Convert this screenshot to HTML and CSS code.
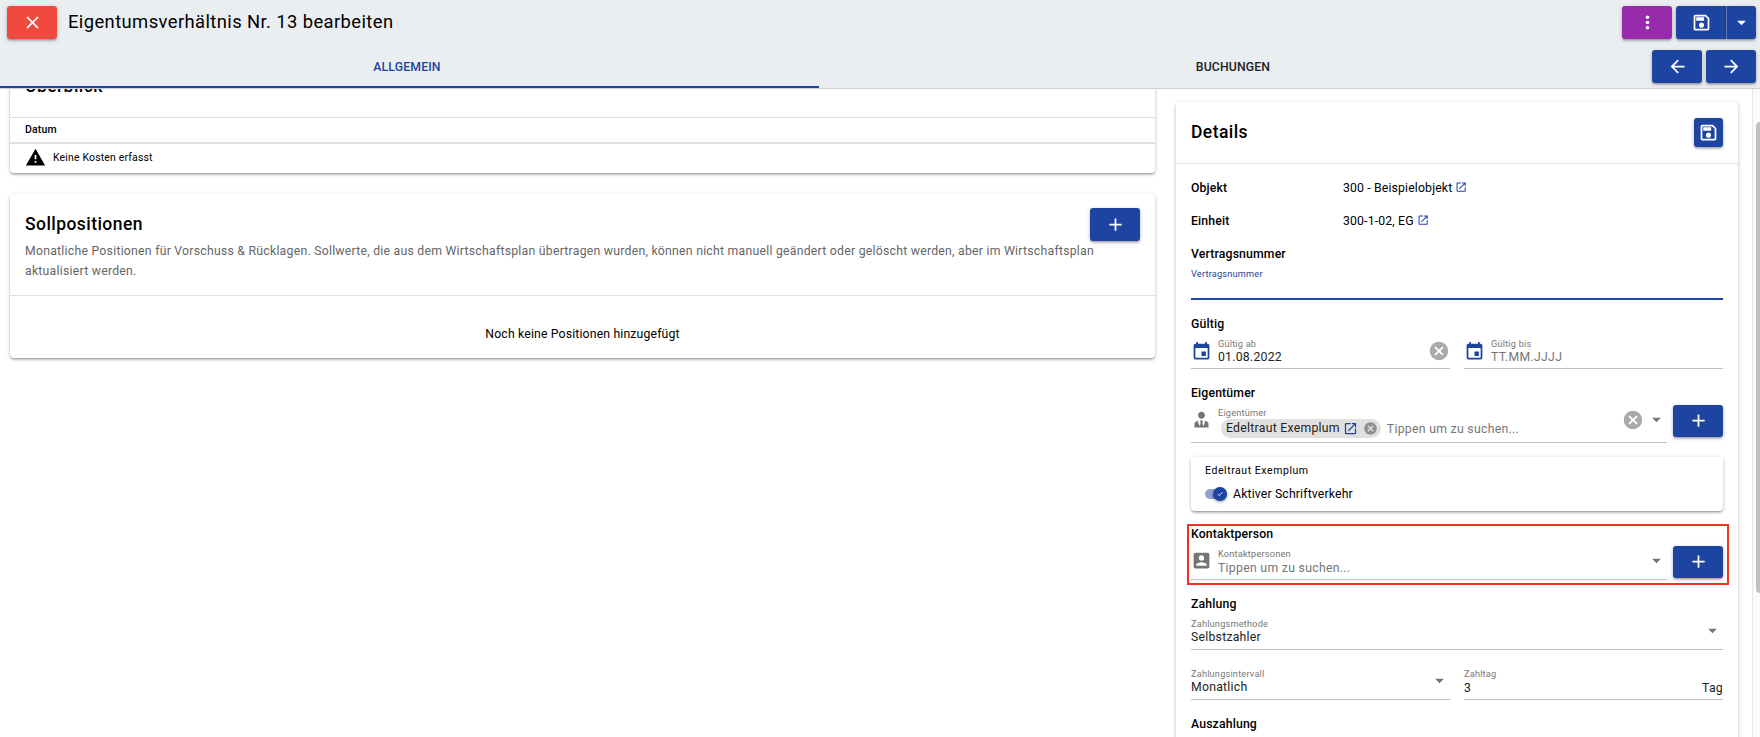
FILE: index.html
```
<!DOCTYPE html>
<html lang="de">
<head>
  <meta charset="UTF-8">
  <title>Eigentumsverhältnis Nr. 13 bearbeiten</title>
  <link rel="stylesheet" href="styles.css">
</head>
<body>
<svg class="sprite">
  <symbol id="close" viewBox="0 0 24 24"><path d="M19,6.41L17.59,5L12,10.59L6.41,5L5,6.41L10.59,12L5,17.59L6.41,19L12,13.41L17.59,19L19,17.59L13.41,12L19,6.41Z"/></symbol>
  <symbol id="dots" viewBox="0 0 24 24"><circle cx="12" cy="6" r="2"/><circle cx="12" cy="12" r="2"/><circle cx="12" cy="18" r="2"/></symbol>
  <symbol id="save" viewBox="0 0 24 24"><path d="M17 3H5C3.89 3 3 3.9 3 5V19C3 20.1 3.89 21 5 21H19C20.1 21 21 20.1 21 19V7L17 3M19 19H5V5H16.17L19 7.83V19M12 12C10.34 12 9 13.34 9 15S10.34 18 12 18 15 16.66 15 15 13.66 12 12 12M6 6H15V10H6V6Z"/></symbol>
  <symbol id="caret" viewBox="0 0 24 24"><path d="M7,10L12,15L17,10H7Z"/></symbol>
  <symbol id="left" viewBox="0 0 24 24"><path d="M20,11V13H8L13.5,18.5L12.08,19.92L4.16,12L12.08,4.08L13.5,5.5L8,11H20Z"/></symbol>
  <symbol id="right" viewBox="0 0 24 24"><path d="M4,11V13H16L10.5,18.5L11.92,19.92L19.84,12L11.92,4.08L10.5,5.5L16,11H4Z"/></symbol>
  <symbol id="plus" viewBox="0 0 24 24"><path d="M19,13H13V19H11V13H5V11H11V5H13V11H19V13Z"/></symbol>
  <symbol id="alert" viewBox="0 0 24 24"><path d="M13 14H11V9H13M13 18H11V16H13M1 21H23L12 2L1 21Z"/></symbol>
  <symbol id="open" viewBox="0 0 24 24"><path d="M14,3V5H17.59L7.76,14.83L9.17,16.24L19,6.41V10H21V3M19,19H5V5H12V3H5C3.89,3 3,3.9 3,5V19A2,2 0 0,0 5,21H19A2,2 0 0,0 21,19V12H19V19Z"/></symbol>
  <symbol id="calendar" viewBox="0 0 24 24"><path d="M19,19H5V8H19M16,1V3H8V1H6V3H5C3.89,3 3,3.89 3,5V19A2,2 0 0,0 5,21H19A2,2 0 0,0 21,19V5C21,3.89 20.1,3 19,3H18V1M17,12H12V17H17V12Z"/></symbol>
  <symbol id="cancel" viewBox="0 0 24 24"><path d="M12 2C6.47 2 2 6.47 2 12s4.47 10 10 10 10-4.47 10-10S17.53 2 12 2zm5 13.59L15.59 17 12 13.41 8.41 17 7 15.59 10.59 12 7 8.41 8.41 7 12 10.59 15.59 7 17 8.41 13.41 12 17 15.59z"/></symbol>
  <symbol id="tie" viewBox="0 0 24 24"><path d="M12 3C14.21 3 16 4.79 16 7S14.21 11 12 11 8 9.21 8 7 9.79 3 12 3M16 13.54C16 14.6 15.72 17.07 13.81 19.83L13 15L13.94 13.12C13.32 13.05 12.67 13 12 13S10.68 13.05 10.06 13.12L11 15L10.19 19.83C8.28 17.07 8 14.6 8 13.54C5.61 14.24 4 15.5 4 17V21H20V17C20 15.5 18.4 14.24 16 13.54Z"/></symbol>
  <symbol id="contact" viewBox="0 0 24 24"><path d="M6,17C6,15 10,13.9 12,13.9C14,13.9 18,15 18,17V18H6M15,9A3,3 0 0,1 12,12A3,3 0 0,1 9,9A3,3 0 0,1 12,6A3,3 0 0,1 15,9M3,5V19A2,2 0 0,0 5,21H19A2,2 0 0,0 21,19V5A2,2 0 0,0 19,3H5C3.89,3 3,3.9 3,5Z"/></symbol>
</svg>

<header class="header">
  <div class="toolbar">
    <button class="btn btn-red"><svg class="icon"><use href="#close"/></svg></button>
    <h1 class="title">Eigentumsverhältnis Nr. 13 bearbeiten</h1>
    <button class="btn btn-purple"><svg class="icon"><use href="#dots"/></svg></button>
    <div class="btn-group">
      <button class="btn"><svg class="icon"><use href="#save"/></svg></button>
      <button class="btn btn-caret"><svg class="icon"><use href="#caret"/></svg></button>
    </div>
  </div>
  <div class="tabbar">
    <nav class="tabs">
      <a class="tab active">ALLGEMEIN</a>
      <a class="tab">BUCHUNGEN</a>
    </nav>
    <button class="btn"><svg class="icon"><use href="#left"/></svg></button>
    <button class="btn"><svg class="icon"><use href="#right"/></svg></button>
  </div>
</header>

<main class="content">
  <div class="col-main">
    <section class="card overview">
      <div class="overview-head"><h2 class="card-title">Überblick</h2></div>
      <div class="table-head">Datum</div>
      <div class="table-empty"><svg class="icon"><use href="#alert"/></svg>Keine Kosten erfasst</div>
    </section>

    <section class="card">
      <div class="positions-head">
        <div class="positions-top">
          <h2 class="card-title">Sollpositionen</h2>
          <button class="btn"><svg class="icon"><use href="#plus"/></svg></button>
        </div>
        <p class="description">Monatliche Positionen für Vorschuss &amp; Rücklagen. Sollwerte, die aus dem Wirtschaftsplan übertragen wurden, können nicht manuell geändert oder gelöscht werden, aber im Wirtschaftsplan<br>aktualisiert werden.</p>
      </div>
      <div class="positions-empty">Noch keine Positionen hinzugefügt</div>
    </section>
  </div>

  <aside class="card details">
    <div class="details-head">
      <h2 class="card-title">Details</h2>
      <button class="btn btn-square"><svg class="icon"><use href="#save"/></svg></button>
    </div>
    <div class="details-body">
      <div class="row"><b>Objekt</b><span>300 - Beispielobjekt</span><svg class="icon link"><use href="#open"/></svg></div>
      <div class="row"><b>Einheit</b><span>300-1-02, EG</span><svg class="icon link"><use href="#open"/></svg></div>

      <h3>Vertragsnummer</h3>
      <div class="field focused">
        <div class="control"><label>Vertragsnummer</label></div>
      </div>

      <h3>Gültig</h3>
      <div class="split dates">
        <div class="field">
          <svg class="icon prepend blue"><use href="#calendar"/></svg>
          <div class="control"><label>Gültig ab</label><span class="value">01.08.2022</span></div>
          <svg class="icon clear"><use href="#cancel"/></svg>
        </div>
        <div class="field">
          <svg class="icon prepend blue"><use href="#calendar"/></svg>
          <div class="control"><label>Gültig bis</label><span class="value placeholder">TT.MM.JJJJ</span></div>
        </div>
      </div>

      <h3>Eigentümer</h3>
      <div class="with-button">
        <div class="field field-chips">
          <svg class="icon prepend"><use href="#tie"/></svg>
          <div class="control">
            <label>Eigentümer</label>
            <div class="chips">
              <span class="chip">Edeltraut Exemplum<svg class="icon chip-link"><use href="#open"/></svg><svg class="icon chip-remove"><use href="#cancel"/></svg></span>
              <span class="value placeholder">Tippen um zu suchen...</span>
            </div>
          </div>
          <svg class="icon clear"><use href="#cancel"/></svg>
          <svg class="icon dropdown"><use href="#caret"/></svg>
        </div>
        <button class="btn"><svg class="icon"><use href="#plus"/></svg></button>
      </div>

      <div class="card owner">
        <div class="owner-name">Edeltraut Exemplum</div>
        <div class="toggle">
          <span class="track"><span class="thumb"><svg viewBox="0 0 24 24"><path d="M5 12.5L10 17L19 7"/></svg></span></span>
          Aktiver Schriftverkehr
        </div>
      </div>

      <div class="highlight">
        <h3>Kontaktperson</h3>
        <div class="with-button">
          <div class="field">
            <svg class="icon prepend"><use href="#contact"/></svg>
            <div class="control"><label>Kontaktpersonen</label><span class="value placeholder search">Tippen um zu suchen...</span></div>
            <svg class="icon dropdown"><use href="#caret"/></svg>
          </div>
          <button class="btn"><svg class="icon"><use href="#plus"/></svg></button>
        </div>
      </div>

      <h3>Zahlung</h3>
      <div class="field">
        <div class="control"><label>Zahlungsmethode</label><span class="value">Selbstzahler</span></div>
        <svg class="icon dropdown"><use href="#caret"/></svg>
      </div>
      <div class="split second">
        <div class="field">
          <div class="control"><label>Zahlungsintervall</label><span class="value">Monatlich</span></div>
          <svg class="icon dropdown"><use href="#caret"/></svg>
        </div>
        <div class="field">
          <div class="control"><label>Zahltag</label><span class="value day">3</span></div>
          <span class="suffix">Tag</span>
        </div>
      </div>

      <h3>Auszahlung</h3>
    </div>
  </aside>

  <div class="scrollbar"><div class="scroll-thumb"></div></div>
</main>
</body>
</html>
```
FILE: styles.css
```
* {
  box-sizing: border-box;
}

body {
  margin: 0;
  height: 737px;
  overflow: hidden;
  display: flex;
  flex-direction: column;
  font-family: Roboto, "Liberation Sans", sans-serif;
  font-size: 12.25px;
  line-height: 20px;
  letter-spacing: .15px;
  color: #000;
  background: #fff;
}

h1, h2, h3, p {
  margin: 0;
}

.sprite {
  display: none;
}

.icon {
  width: 21px;
  height: 21px;
  flex: none;
  fill: currentColor;
}

.btn {
  width: 50px;
  height: 33px;
  flex: none;
  padding: 0 0 1px;
  border: 0;
  border-radius: 3px;
  display: flex;
  align-items: center;
  justify-content: center;
  color: #fff;
  background: #1d44a1;
  box-shadow: 0 1px 4px rgba(0, 0, 0, .2), 0 2px 2px rgba(0, 0, 0, .14), 0 2px 1px -1px rgba(0, 0, 0, .12);
}

.btn-red {
  background: #f04a3e;
}

.btn-purple {
  background: #982aac;
}

.btn-group {
  display: flex;
}

.btn-group .btn:first-child {
  width: 51px;
  border-radius: 3px 0 0 3px;
  border-right: 1px solid #6e87c2;
}

.btn-group .btn-caret {
  width: 29px;
  border-radius: 0 3px 3px 0;
}

.card {
  border-radius: 4px;
  background: #fff;
  box-shadow: 0 1px 4px rgba(0, 0, 0, .2), 0 2px 2px rgba(0, 0, 0, .14), 0 2px 1px -1px rgba(0, 0, 0, .12);
}

.card-title {
  margin-top: -2px;
  font-size: 17.5px;
  font-weight: 500;
  letter-spacing: .44px;
}

/* header */
.header {
  flex: none;
  height: 89px;
  border-bottom: 1px solid #cdd0d2;
  background: #ebeef1;
  position: relative;
  z-index: 1;
}

.toolbar {
  height: 44px;
  padding: 6px 4px 0 7px;
  display: flex;
  align-items: flex-start;
  gap: 4px;
}

.title {
  flex: 1;
  margin-left: 7px;
  font-size: 18.4px;
  font-weight: 400;
  line-height: 32px;
  letter-spacing: .4px;
}

.tabbar {
  height: 44px;
  padding-right: 4px;
  display: flex;
  gap: 4px;
}

.tabbar .btn {
  margin-top: 6px;
}

.tabs {
  flex: 1;
  display: flex;
  margin-right: 10px;
}

.tab {
  width: 819px;
  padding-left: 9px;
  line-height: 46px;
  text-align: center;
  font-weight: 500;
  color: #222;
}

.tab.active {
  padding: 0 5px 0 0;
  color: #1d44a1;
  border-bottom: 2px solid #1d44a1;
}

/* page */
.content {
  flex: 1;
  min-height: 0;
  display: flex;
  overflow: hidden;
}

.col-main {
  width: 1145px;
  margin: -20px 21px 0 10px;
}

.overview {
  height: 104px;
  margin-bottom: 21px;
}

.overview-head {
  height: 49px;
  padding: 9px 15px;
  border-bottom: 1px solid #e0e0e0;
}

.table-head {
  height: 26px;
  padding-left: 15px;
  border-bottom: 2px solid #e0e0e0;
  font-size: 10.5px;
  font-weight: 500;
  line-height: 23px;
}

.table-empty {
  height: 28px;
  padding-left: 15px;
  display: flex;
  align-items: center;
  gap: 7px;
  font-size: 10.5px;
}

.table-empty .icon {
  margin-bottom: 2px;
}

.positions-head {
  height: 102px;
  padding: 14px 15px 0;
  border-bottom: 1px solid #e0e0e0;
}

.positions-top {
  height: 33px;
  display: flex;
  justify-content: space-between;
  align-items: center;
}

.description {
  color: #666;
  letter-spacing: .245px;
}

.positions-empty {
  height: 62px;
  padding-top: 28px;
  text-align: center;
}

/* details */
.details {
  width: 562px;
  margin-top: 13px;
  height: 700px;
}

.details-head {
  height: 62px;
  padding: 0 15px;
  display: flex;
  align-items: center;
  justify-content: space-between;
  border-bottom: 1px solid #e0e0e0;
}

.btn-square {
  width: 29px;
  height: 29px;
}

.details-body {
  padding: 7px 15px 0;
}

.row {
  height: 33px;
  display: flex;
  align-items: center;
}

.row b {
  width: 152px;
  font-weight: 500;
}

.link {
  width: 12.25px;
  height: 12.25px;
  margin-left: 3px;
  color: #1d44a1;
}

h3 {
  margin-top: 14px;
  font-size: 12.25px;
  font-weight: 500;
}

.row + h3 {
  margin-top: 7px;
}

.field {
  flex: 1;
  height: 36px;
  display: flex;
  border-bottom: 1px solid #c2c2c2;
}

.focused {
  border-bottom: 2px solid #1d44a1;
}

.control {
  flex: 1;
  display: flex;
  flex-direction: column;
  padding-top: 4px;
}

label {
  font-size: 9.2px;
  line-height: 11px;
  letter-spacing: .2px;
  color: #777;
}

.focused label {
  color: #1d44a1;
}

.value {
  line-height: 16px;
  letter-spacing: .24px;
  color: #222;
}

.placeholder {
  color: #757575;
  letter-spacing: .29px;
}

.day,
.search {
  padding-top: 1px;
}

.suffix {
  padding-top: 16px;
  line-height: 16px;
  letter-spacing: .24px;
  color: #222;
}

.prepend {
  margin: 6px 6px 0 0;
  color: #757575;
}

.blue {
  margin-top: 7px;
  color: #1d44a1;
}

.clear {
  width: 22px;
  height: 22px;
  margin-top: 6px;
  color: #aaa;
}

.dropdown {
  margin-top: 6px;
  color: #757575;
}

.clear + .dropdown {
  margin-left: 2px;
}

.split {
  display: flex;
  gap: 14px;
}

.dates .field {
  height: 35px;
}

.second {
  margin-top: 14px;
}

.with-button {
  display: flex;
  gap: 6px;
}

.with-button .btn {
  height: 32px;
  margin-top: 2px;
}

.field-chips {
  height: 40px;
}

.chips {
  display: flex;
  margin-top: 1px;
}

.chips .value {
  padding-top: 2px;
}

.chip {
  height: 19px;
  padding: 0 3px 1px 5px;
  margin: 0 6px 0 3px;
  border-radius: 10px;
  display: flex;
  align-items: center;
  letter-spacing: .26px;
  background: #e0e0e0;
  color: #222;
}

.chip-link {
  width: 15px;
  height: 15px;
  margin-left: 3px;
  color: #1d44a1;
}

.chip-remove {
  width: 15px;
  height: 15px;
  margin-left: 5px;
  color: #919191;
}

.owner {
  height: 54px;
  margin-top: 14px;
  padding: 4px 14px;
}

.owner-name {
  font-size: 10.5px;
  letter-spacing: .56px;
}

.toggle {
  height: 26px;
  display: flex;
  align-items: center;
  gap: 6px;
}

.track {
  width: 22px;
  height: 10px;
  border-radius: 5px;
  background: #8ea1d0;
  position: relative;
}

.thumb {
  position: absolute;
  top: -2px;
  right: 0;
  width: 14px;
  height: 14px;
  border-radius: 50%;
  background: #1d44a1;
  box-shadow: 0 1px 3px rgba(0, 0, 0, .4);
}

.thumb svg {
  display: block;
  width: 8px;
  height: 8px;
  margin: 3px;
  fill: none;
  stroke: #fff;
  stroke-width: 2.5;
}

.highlight {
  margin: 13px -6px 0 -4px;
  padding: 0 4px 3px 2px;
  border: 2px solid #f3301f;
}

.highlight h3 {
  margin-top: -2px;
}

.highlight + h3 {
  margin-top: 9px;
}

.scrollbar {
  width: 8px;
  margin-left: auto;
  padding-top: 33px;
  border-left: 1px solid #e8e8e8;
  background: #fafafa;
}

.scroll-thumb {
  height: 471px;
  margin-left: 3px;
  border-radius: 4px 0 0 4px;
  background: #c1c1c1;
}
```
